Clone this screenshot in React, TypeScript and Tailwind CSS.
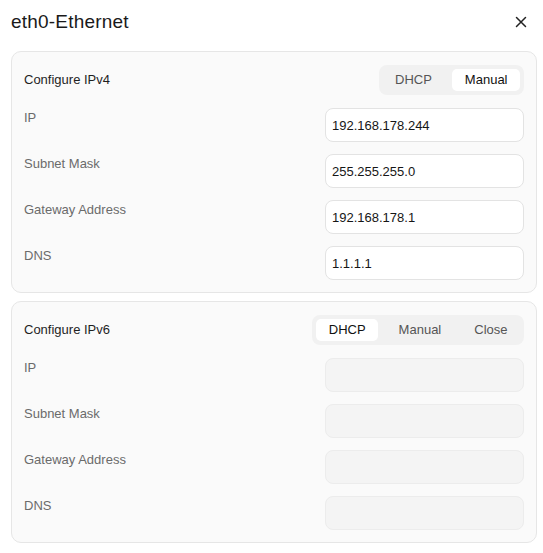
import React from 'react';

type Field = { label: string; value?: string };

const FONT = { fontFamily: '"Liberation Sans", Arial, sans-serif' };

const ipv4: Field[] = [
    { label: 'IP', value: '192.168.178.244' },
    { label: 'Subnet Mask', value: '255.255.255.0' },
    { label: 'Gateway Address', value: '192.168.178.1' },
    { label: 'DNS', value: '1.1.1.1' },
];

const ipv6: Field[] = [{ label: 'IP' }, { label: 'Subnet Mask' }, { label: 'Gateway Address' }, { label: 'DNS' }];

const Segmented = ({ options, active }: { options: string[]; active: string }) => (
    <div className="flex h-[30px] items-center gap-2 rounded-lg bg-[#f1f1f1] p-1">
        {options.map((option) => (
            <button
                key={option}
                type="button"
                className={
                    option === active
                        ? 'flex h-[22px] items-center rounded-[5px] bg-white px-[12.5px] text-[13px] text-[#111]'
                        : 'flex h-[22px] items-center rounded-[5px] px-[12.5px] text-[13px] text-[#555]'
                }
            >
                {option}
            </button>
        ))}
    </div>
);

const ConfigCard = ({
    title,
    options,
    active,
    fields,
    disabled,
}: {
    title: string;
    options: string[];
    active: string;
    fields: Field[];
    disabled?: boolean;
}) => (
    <section className="w-[526px] rounded-[10px] border border-[#e6e6e6] bg-[#fafafa] px-3 pb-3 pt-[13px]">
        <div className="mb-[13px] flex items-center justify-between">
            <h3 className="text-[13px] text-[#1f1f1f]">{title}</h3>
            <Segmented options={options} active={active} />
        </div>
        <div className="flex flex-col gap-3">
            {fields.map((field) => (
                <div key={field.label} className="flex items-start justify-between">
                    <span className="pt-px text-[13px] leading-[18px] text-[#6b6b6b]">{field.label}</span>
                    <input
                        readOnly
                        disabled={disabled}
                        value={field.value ?? ''}
                        className={
                            disabled
                                ? 'h-[34px] w-[199px] rounded-lg border border-[#ececec] bg-[#f4f4f4] px-[6px] text-[13px] outline-none'
                                : 'h-[34px] w-[199px] rounded-lg border border-[#e3e3e3] bg-white px-[6px] text-[13px] text-[#161616] outline-none'
                        }
                        style={FONT}
                    />
                </div>
            ))}
        </div>
    </section>
);

export default function App() {
    return (
        <div className="min-h-[553px] w-[543px] bg-white" style={FONT}>
            <header className="flex h-[44px] items-center justify-between pl-[11px] pr-[16px]">
                <h2 className="text-[19px] tracking-[0.2px] text-[#1a1a1a]">eth0-Ethernet</h2>
                <svg width="12" height="12" viewBox="0 0 12 12" className="text-[#222]">
                    <path d="M1.5 1.5 L10.5 10.5 M10.5 1.5 L1.5 10.5" stroke="currentColor" strokeWidth="1.5" strokeLinecap="round" />
                </svg>
            </header>
            <div className="mt-[7px] flex flex-col gap-2 pl-[11px]">
                <ConfigCard title="Configure IPv4" options={['DHCP', 'Manual']} active="Manual" fields={ipv4} />
                <ConfigCard title="Configure IPv6" options={['DHCP', 'Manual', 'Close']} active="DHCP" fields={ipv6} disabled />
            </div>
        </div>
    );
}
